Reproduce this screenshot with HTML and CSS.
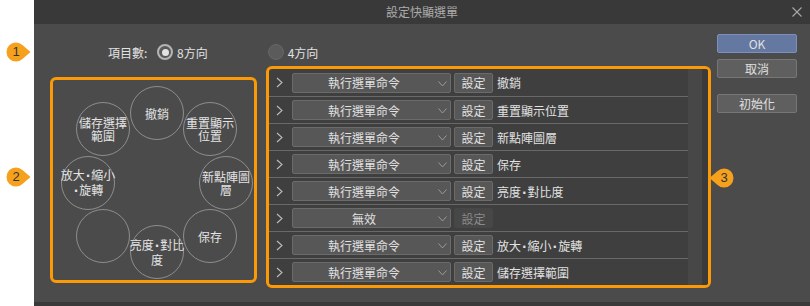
FILE: index.html
```html
<!DOCTYPE html>
<html lang="zh-Hant">

<head>
    <meta charset="UTF-8">
    <meta name="viewport" content="width=device-width, initial-scale=1.0">
    <title>設定快顯選單</title>
    <link rel="stylesheet" href="styles.css">
</head>

<body>
    <div class="page">

        <!-- Dialog window -->
        <div class="dialog">
            <div class="titlebar">
                <span></span>
                <span class="title">設定快顯選單</span>
                <svg class="close" width="10" height="10" viewBox="0 0 10 10">
                    <path d="M0.5 0.5 L9.5 9.5 M9.5 0.5 L0.5 9.5" stroke="#a8a8a8" stroke-width="1.1" fill="none" />
                </svg>
            </div>

            <div class="dialog-body">
                <div class="main">

                    <!-- Number of items -->
                    <div class="options">
                        <span class="options-label">項目數:</span>
                        <span class="radio checked"></span>
                        <span class="radio-text">8方向</span>
                        <span class="radio second"></span>
                        <span class="radio-text">4方向</span>
                    </div>

                    <div class="panels">
                        <!-- Ring preview -->
                        <div class="ring-panel">
                            <div class="node n1"><span class="node-text">撤銷</span></div>
                            <div class="node n2"><span class="node-text">重置顯示<br>位置</span></div>
                            <div class="node n3"><span class="node-text">新點陣圖<br>層</span></div>
                            <div class="node n4"><span class="node-text">保存</span></div>
                            <div class="node n5"><span class="node-text">亮度<span class="dot">·</span>對比<br>度</span></div>
                            <div class="node n6"></div>
                            <div class="node n7"><span class="node-text">放大<span class="dot">·</span>縮小<br><span class="dot">·</span>旋轉</span></div>
                            <div class="node n8"><span class="node-text">儲存選擇<br>範圍</span></div>
                        </div>

                        <!-- Command list -->
                        <div class="list-panel">
                            <div class="list">
                                <div class="row">
                                    <svg class="chevron" width="7" height="11" viewBox="0 0 7 11"><path d="M1 1 L6 5.5 L1 10" stroke="#bdbdbd" stroke-width="1.1" fill="none" /></svg>
                                    <div class="select"><span>執行選單命令</span><svg class="arrow" width="9" height="6" viewBox="0 0 9 6"><path d="M0.5 0.5 L4.5 5 L8.5 0.5" stroke="#9a9a9a" stroke-width="1" fill="none" /></svg></div>
                                    <div class="set-btn">設定</div>
                                    <span class="command">撤銷</span>
                                </div>
                                <div class="row">
                                    <svg class="chevron" width="7" height="11" viewBox="0 0 7 11"><path d="M1 1 L6 5.5 L1 10" stroke="#bdbdbd" stroke-width="1.1" fill="none" /></svg>
                                    <div class="select"><span>執行選單命令</span><svg class="arrow" width="9" height="6" viewBox="0 0 9 6"><path d="M0.5 0.5 L4.5 5 L8.5 0.5" stroke="#9a9a9a" stroke-width="1" fill="none" /></svg></div>
                                    <div class="set-btn">設定</div>
                                    <span class="command">重置顯示位置</span>
                                </div>
                                <div class="row">
                                    <svg class="chevron" width="7" height="11" viewBox="0 0 7 11"><path d="M1 1 L6 5.5 L1 10" stroke="#bdbdbd" stroke-width="1.1" fill="none" /></svg>
                                    <div class="select"><span>執行選單命令</span><svg class="arrow" width="9" height="6" viewBox="0 0 9 6"><path d="M0.5 0.5 L4.5 5 L8.5 0.5" stroke="#9a9a9a" stroke-width="1" fill="none" /></svg></div>
                                    <div class="set-btn">設定</div>
                                    <span class="command">新點陣圖層</span>
                                </div>
                                <div class="row">
                                    <svg class="chevron" width="7" height="11" viewBox="0 0 7 11"><path d="M1 1 L6 5.5 L1 10" stroke="#bdbdbd" stroke-width="1.1" fill="none" /></svg>
                                    <div class="select"><span>執行選單命令</span><svg class="arrow" width="9" height="6" viewBox="0 0 9 6"><path d="M0.5 0.5 L4.5 5 L8.5 0.5" stroke="#9a9a9a" stroke-width="1" fill="none" /></svg></div>
                                    <div class="set-btn">設定</div>
                                    <span class="command">保存</span>
                                </div>
                                <div class="row">
                                    <svg class="chevron" width="7" height="11" viewBox="0 0 7 11"><path d="M1 1 L6 5.5 L1 10" stroke="#bdbdbd" stroke-width="1.1" fill="none" /></svg>
                                    <div class="select"><span>執行選單命令</span><svg class="arrow" width="9" height="6" viewBox="0 0 9 6"><path d="M0.5 0.5 L4.5 5 L8.5 0.5" stroke="#9a9a9a" stroke-width="1" fill="none" /></svg></div>
                                    <div class="set-btn">設定</div>
                                    <span class="command">亮度<span class="dot">·</span>對比度</span>
                                </div>
                                <div class="row">
                                    <svg class="chevron" width="7" height="11" viewBox="0 0 7 11"><path d="M1 1 L6 5.5 L1 10" stroke="#bdbdbd" stroke-width="1.1" fill="none" /></svg>
                                    <div class="select"><span>無效</span><svg class="arrow" width="9" height="6" viewBox="0 0 9 6"><path d="M0.5 0.5 L4.5 5 L8.5 0.5" stroke="#9a9a9a" stroke-width="1" fill="none" /></svg></div>
                                    <div class="set-btn disabled">設定</div>
                                    <span class="command"></span>
                                </div>
                                <div class="row">
                                    <svg class="chevron" width="7" height="11" viewBox="0 0 7 11"><path d="M1 1 L6 5.5 L1 10" stroke="#bdbdbd" stroke-width="1.1" fill="none" /></svg>
                                    <div class="select"><span>執行選單命令</span><svg class="arrow" width="9" height="6" viewBox="0 0 9 6"><path d="M0.5 0.5 L4.5 5 L8.5 0.5" stroke="#9a9a9a" stroke-width="1" fill="none" /></svg></div>
                                    <div class="set-btn">設定</div>
                                    <span class="command">放大<span class="dot">·</span>縮小<span class="dot">·</span>旋轉</span>
                                </div>
                                <div class="row">
                                    <svg class="chevron" width="7" height="11" viewBox="0 0 7 11"><path d="M1 1 L6 5.5 L1 10" stroke="#bdbdbd" stroke-width="1.1" fill="none" /></svg>
                                    <div class="select"><span>執行選單命令</span><svg class="arrow" width="9" height="6" viewBox="0 0 9 6"><path d="M0.5 0.5 L4.5 5 L8.5 0.5" stroke="#9a9a9a" stroke-width="1" fill="none" /></svg></div>
                                    <div class="set-btn">設定</div>
                                    <span class="command">儲存選擇範圍</span>
                                </div>
                            </div>
                            <div class="scrollbar"></div>
                        </div>
                    </div>
                </div>

                <!-- Dialog buttons -->
                <div class="actions">
                    <div class="btn primary">OK</div>
                    <div class="btn">取消</div>
                    <div class="btn reset">初始化</div>
                </div>
            </div>
        </div>

        <!-- Callout badges -->
        <svg class="badge b1" width="25" height="20" viewBox="0 0 25 20">
            <path d="M24.5 10 L16.44 3.02 A9.5 9.5 0 1 0 16.44 16.98 Z" fill="#f6a11d" />
            <text x="10" y="14.3" text-anchor="middle">1</text>
        </svg>
        <svg class="badge b2" width="25" height="20" viewBox="0 0 25 20">
            <path d="M24.5 10 L16.44 3.02 A9.5 9.5 0 1 0 16.44 16.98 Z" fill="#f6a11d" />
            <text x="10" y="14.3" text-anchor="middle">2</text>
        </svg>
        <svg class="badge b3" width="25" height="20" viewBox="0 0 25 20">
            <path d="M0.5 10 L8.56 3.02 A9.5 9.5 0 1 1 8.56 16.98 Z" fill="#f6a11d" />
            <text x="15" y="14.3" text-anchor="middle">3</text>
        </svg>
    </div>
</body>

</html>
```

FILE: styles.css
```css
/* Reset */
* {
    margin: 0;
    padding: 0;
    box-sizing: border-box;
}

body {
    background-color: white;
    font-family: "Noto Sans CJK TC", "Noto Sans", sans-serif;
    font-size: 12px;
    color: #e2e2e2;
}

.page {
    position: relative;
    width: 810px;
    height: 306px;
}

/* Narrow middle dot between words */
.dot {
    font-family: "DejaVu Sans", sans-serif;
    font-weight: bold;
    padding: 0 1px;
}

/* Dialog frame */
.dialog {
    margin-left: 34px;
    width: 776px;
    height: 306px;
    background-color: #4b4b4b;
    border-bottom: 4px solid #393939;
}

.titlebar {
    height: 24px;
    background-color: #393939;
    display: grid;
    grid-template-columns: 1fr auto 1fr;
    align-items: center;
}

.title {
    color: #acacac;
    line-height: 24px;
}

.close {
    justify-self: end;
    margin-right: 8px;
}

.dialog-body {
    display: flex;
    height: 278px;
}

.main {
    width: 677px;
    padding: 18px 0 0 16px;
}

/* Radio row */
.options {
    height: 20px;
    display: flex;
    align-items: center;
    padding-left: 58px;
    margin-bottom: 4px;
}

.options-label {
    width: 49px;
}

.radio {
    width: 16px;
    height: 16px;
    border-radius: 50%;
    background-color: #5b5b5b;
    border: 1px solid #666;
}

.radio.checked {
    border: 2px solid #b4b4b4;
    background-color: #5a5a5a;
    display: flex;
    justify-content: center;
    align-items: center;
}

.radio.checked::after {
    content: "";
    width: 7px;
    height: 7px;
    border-radius: 50%;
    background-color: #e4e4e4;
}

.radio.second {
    margin-left: 60px;
}

.radio-text {
    margin-left: 4px;
}

.panels {
    display: flex;
    align-items: flex-start;
    gap: 9px;
}

/* Ring preview */
.ring-panel {
    position: relative;
    width: 207px;
    height: 206px;
    margin-top: 11px;
    border: 3px solid #fb9a06;
    border-radius: 6px;
}

.node {
    position: absolute;
    width: 54px;
    height: 54px;
    border: 1px solid #8e8e8e;
    border-radius: 50%;
    display: flex;
    justify-content: center;
    align-items: center;
    color: #e4e4e4;
}

.node-text {
    text-align: center;
    line-height: 13px;
    white-space: nowrap;
}

.n1 { left: 77px; top: 6px; }
.n2 { left: 130px; top: 22px; }
.n3 { left: 146px; top: 76px; }
.n4 { left: 130px; top: 129px; }
.n5 { left: 77px; top: 145px; }
.n6 { left: 23px; top: 129px; }
.n7 { left: 8px; top: 76px; }
.n8 { left: 23px; top: 22px; }

/* Command list */
.list-panel {
    width: 445px;
    height: 222px;
    display: flex;
    border: 3px solid #fb9a06;
    border-radius: 6px;
    background-color: #3f3f3f;
    overflow: hidden;
}

.list {
    width: 419px;
}

.row {
    height: 27px;
    display: flex;
    align-items: center;
    border-top: 1px solid #696969;
}

.row:first-child {
    border-top: none;
}

.chevron {
    margin-left: 7px;
}

.select {
    margin-left: 9px;
    width: 159px;
    height: 20px;
    display: flex;
    align-items: center;
    justify-content: center;
    padding-right: 15px;
    background-color: #575757;
    border: 1px solid #6b6b6b;
    border-radius: 2px;
    position: relative;
}

.arrow {
    position: absolute;
    right: 3px;
    top: 7px;
}

.set-btn {
    margin-left: 3px;
    width: 39px;
    height: 20px;
    display: flex;
    align-items: center;
    justify-content: center;
    background-color: #575757;
    border: 1px solid #6b6b6b;
    border-radius: 2px;
}

.set-btn.disabled {
    background-color: #474747;
    border-color: #474747;
    color: #8a8a8a;
}

.command {
    margin-left: 4px;
}

.scrollbar {
    width: 20px;
    background-color: #474747;
    border-right: 6px solid #3b3b3b;
}

/* Right buttons */
.actions {
    margin-left: 6px;
    padding-top: 10px;
    width: 80px;
    display: flex;
    flex-direction: column;
    gap: 6px;
}

.btn {
    height: 19px;
    display: flex;
    align-items: center;
    justify-content: center;
    background-color: #5f5f5f;
    border: 1px solid #767676;
    border-radius: 2px;
    color: #e0e0e0;
}

.btn.primary {
    background-color: #6478a1;
    border-color: #7d90b9;
}

.btn.reset {
    margin-top: 10px;
}

/* Numbered callouts */
.badge {
    position: absolute;
}

.badge text {
    font-family: "Liberation Sans", sans-serif;
    font-size: 13px;
    fill: #333;
}

.b1 { left: 6px; top: 42px; }
.b2 { left: 6px; top: 167px; }
.b3 { left: 709px; top: 168px; }
```
